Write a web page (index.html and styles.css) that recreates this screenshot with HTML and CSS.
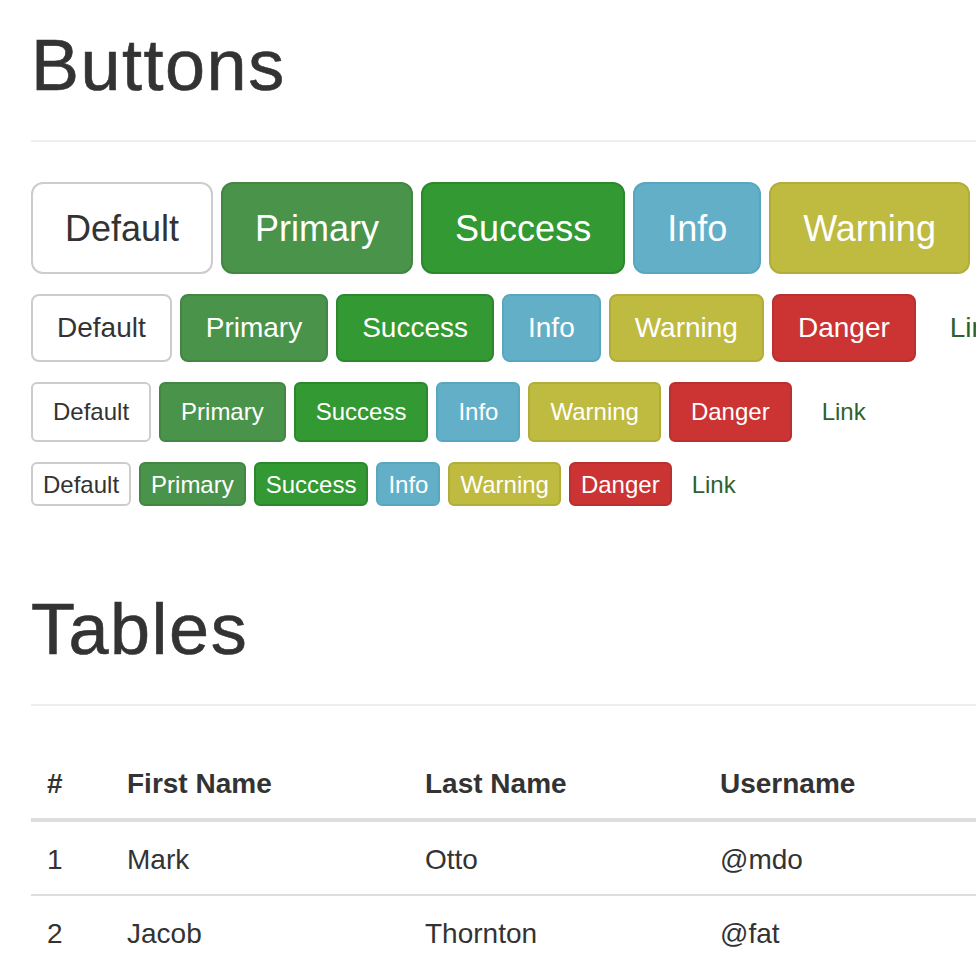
FILE: index.html
```html
<!DOCTYPE html>
<html>
<head>
<meta charset="utf-8">
<link rel="stylesheet" href="styles.css">
</head>
<body>
<div class="container">
  <div class="page-header first"><h1>Buttons</h1></div>
  <div class="btn-row">
    <button class="btn btn-lg btn-default">Default</button>
    <button class="btn btn-lg btn-primary">Primary</button>
    <button class="btn btn-lg btn-success">Success</button>
    <button class="btn btn-lg btn-info">Info</button>
    <button class="btn btn-lg btn-warning">Warning</button>
    <button class="btn btn-lg btn-danger">Danger</button>
    <button class="btn btn-lg btn-link">Link</button>
  </div>
  <div class="btn-row">
    <button class="btn btn-default">Default</button>
    <button class="btn btn-primary">Primary</button>
    <button class="btn btn-success">Success</button>
    <button class="btn btn-info">Info</button>
    <button class="btn btn-warning">Warning</button>
    <button class="btn btn-danger">Danger</button>
    <button class="btn btn-link">Link</button>
  </div>
  <div class="btn-row">
    <button class="btn btn-sm btn-default">Default</button>
    <button class="btn btn-sm btn-primary">Primary</button>
    <button class="btn btn-sm btn-success">Success</button>
    <button class="btn btn-sm btn-info">Info</button>
    <button class="btn btn-sm btn-warning">Warning</button>
    <button class="btn btn-sm btn-danger">Danger</button>
    <button class="btn btn-sm btn-link">Link</button>
  </div>
  <div class="btn-row">
    <button class="btn btn-xs btn-default">Default</button>
    <button class="btn btn-xs btn-primary">Primary</button>
    <button class="btn btn-xs btn-success">Success</button>
    <button class="btn btn-xs btn-info">Info</button>
    <button class="btn btn-xs btn-warning">Warning</button>
    <button class="btn btn-xs btn-danger">Danger</button>
    <button class="btn btn-xs btn-link">Link</button>
  </div>

  <div class="page-header second"><h1>Tables</h1></div>
  <table class="table">
    <colgroup>
      <col class="c1"><col class="c2"><col class="c3"><col class="c4">
    </colgroup>
    <thead>
      <tr><th>#</th><th>First Name</th><th>Last Name</th><th>Username</th></tr>
    </thead>
    <tbody>
      <tr><td>1</td><td>Mark</td><td>Otto</td><td>@mdo</td></tr>
      <tr><td>2</td><td>Jacob</td><td>Thornton</td><td>@fat</td></tr>
      <tr><td>3</td><td>Larry</td><td>the Bird</td><td>@twitter</td></tr>
    </tbody>
  </table>
</div>
</body>
</html>
```

FILE: styles.css
```css
html, body {
  margin: 0;
  padding: 0;
  overflow: hidden;
  background: #fff;
}
body {
  font-family: "Liberation Sans", Arial, sans-serif;
  color: #333;
  font-size: 28px;
  line-height: 40px;
}
.container {
  padding-left: 31px;
  width: 1240px;
}
.page-header {
  padding-bottom: 35px;
  border-bottom: 2px solid #eee;
  margin-bottom: 40px;
}
.page-header.first { margin-top: 25px; }
.page-header.second { margin-top: 83px; }
.page-header h1 {
  margin: 0;
  font-size: 72px;
  line-height: 80px;
  font-weight: 400;
  letter-spacing: 1.5px;
  -webkit-text-stroke: 0.6px #333;
  color: #333;
}
.btn-row {
  display: flex;
  flex-wrap: nowrap;
  gap: 8px;
  margin-bottom: 20px;
}
.btn {
  flex: none;
  font-family: "Liberation Sans", Arial, sans-serif;
  font-size: 28px;
  line-height: 40px;
  padding: 12px 24px;
  border: 2px solid transparent;
  border-radius: 8px;
  background: #fff;
  color: #333;
  white-space: nowrap;
  margin: 0;
}
.btn-lg {
  font-size: 36px;
  line-height: 48px;
  padding: 21px 32px 19px;
  border-radius: 12px;
}
.btn-sm {
  font-size: 24px;
  line-height: 36px;
  padding: 10px 20px;
  border-radius: 6px;
}
.btn-xs {
  font-size: 24px;
  line-height: 36px;
  padding: 3px 10px 1px;
  border-radius: 6px;
}
.btn-default { background: #fff; border-color: #ccc; color: #333; }
.btn-primary { background: #4a934a; border-color: #438543; color: #fff; }
.btn-success { background: #339933; border-color: #2d872d; color: #fff; }
.btn-info { background: #63afc7; border-color: #58a7c0; color: #fff; }
.btn-warning { background: #bfba40; border-color: #b2ad39; color: #fff; }
.btn-danger { background: #cc3333; border-color: #b93030; color: #fff; }
.btn-link { background: transparent; border-color: transparent; color: #2f612f; }

.table {
  border-collapse: collapse;
  table-layout: fixed;
  width: 1180px;
}
.c1 { width: 80px; }
.c2 { width: 298px; }
.c3 { width: 295px; }
.table th, .table td {
  text-align: left;
  padding: 18px 16px 14px;
  line-height: 40px;
  font-size: 28px;
  vertical-align: top;
}
.table th {
  font-weight: bold;
  border-bottom: 4px solid #ddd;
}
.table td {
  border-top: 2px solid #ddd;
}
```
